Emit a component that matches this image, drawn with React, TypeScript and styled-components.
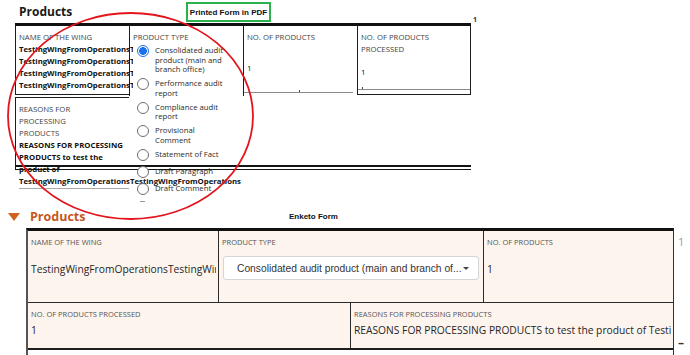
import React from 'react'
import styled, { createGlobalStyle } from 'styled-components'

const wingName = 'TestingWingFromOperationsTestingWingFromOperations'
const reasons =
	'REASONS FOR PROCESSING PRODUCTS to test the product of TestingWingFromOperationsTestingWingFromOperations'

const productTypes = [
	'Consolidated audit product (main and branch office)',
	'Performance audit report',
	'Compliance audit report',
	'Provisional Comment',
	'Statement of Fact',
	'Draft Paragraph',
	'Draft Comment'
]

const App: React.FC = () => {
	return (
		<>
			<GlobalStyle />
			<Page>
				<PdfSection>
					<PdfHeader>
						<SectionTitle>Products</SectionTitle>
						<SourceTag>Printed Form in PDF</SourceTag>
						<span />
						<PageMark>1</PageMark>
					</PdfHeader>
					<PdfTable>
						<PdfRow>
							<PdfCell $closed>
								<PdfLabel>Name of the wing</PdfLabel>
								{[0, 1, 2, 3].map((i) => (
									<PdfClipped key={i}>{wingName}</PdfClipped>
								))}
							</PdfCell>
							<PdfCell>
								<PdfLabel>Product type</PdfLabel>
								<RadioList>
									{productTypes.map((type, i) => (
										<RadioOption key={type}>
											<RadioCircle $checked={i === 0} />
											<RadioText>{type}</RadioText>
										</RadioOption>
									))}
									<RadioStub />
								</RadioList>
							</PdfCell>
							<PdfCell>
								<PdfLabel>No. of products</PdfLabel>
								<PdfNumber $gap={19}>1</PdfNumber>
								<PdfInputLine $tick="50%" $right={4} $bottom={3} />
							</PdfCell>
							<PdfCell $closed $right>
								<PdfLabel>No. of products processed</PdfLabel>
								<PdfNumber $gap={11}>1</PdfNumber>
								<PdfInputLine $tick="4px" $right={0} $bottom={4} />
							</PdfCell>
						</PdfRow>
						<PdfReasonsRow>
							<PdfReasonsCell>
								<PdfLabel $narrow>Reasons for processing products</PdfLabel>
								<PdfReasonsValue>{reasons}</PdfReasonsValue>
							</PdfReasonsCell>
						</PdfReasonsRow>
						<PdfRule />
					</PdfTable>
				</PdfSection>

				<EnketoSection>
					<EnketoHeader>
						<Caret />
						<GroupTitle>Products</GroupTitle>
						<SourceCaption>Enketo Form</SourceCaption>
					</EnketoHeader>
					<EnketoBody>
						<FormTable>
							<FormRow $cols="190px 265px 1fr" $height={72} $rule="1px solid #2b2b2b">
								<FormCell>
									<FormLabel>Name of the wing</FormLabel>
									<FormValue $gap={15}>{wingName}</FormValue>
								</FormCell>
								<FormCell $divider>
									<FormLabel>Product type</FormLabel>
									<SelectBox>
										<SelectText>Consolidated audit product (main and branch of...</SelectText>
										<SelectCaret />
									</SelectBox>
								</FormCell>
								<FormCell $divider>
									<FormLabel>No. of products</FormLabel>
									<FormValue $gap={15}>1</FormValue>
								</FormCell>
							</FormRow>
							<FormRow $cols="322px 1fr" $height={47} $rule="2px solid #1e1e1e">
								<FormCell>
									<FormLabel>No. of products processed</FormLabel>
									<FormValue $gap={4}>1</FormValue>
								</FormCell>
								<FormCell $divider>
									<FormLabel>Reasons for processing products</FormLabel>
									<FormValue $gap={4}>{reasons}</FormValue>
								</FormCell>
							</FormRow>
							<FormRow $cols="1fr" $height={12} $rule="none" />
						</FormTable>
						<SideMarks>
							<RepeatIndex>1</RepeatIndex>
							<RemoveMark>–</RemoveMark>
						</SideMarks>
					</EnketoBody>
				</EnketoSection>

				<Annotation viewBox="0 0 260 225" aria-hidden>
					<ellipse cx="130.5" cy="116" rx="122.5" ry="103" fill="none" stroke="#e3141c" strokeWidth="1.8" />
				</Annotation>
			</Page>
		</>
	)
}

export default App

const GlobalStyle = createGlobalStyle`
	html, body {
		margin: 0;
		padding: 0;
		background: #fff;
	}
	body {
		font-family: 'Open Sans', 'Liberation Sans', sans-serif;
		color: #222;
	}
	* {
		box-sizing: border-box;
	}
`

const Page = styled.div`
	position: relative;
	width: 690px;
	height: 355px;
	overflow: hidden;
	background: #fff;
`

/* ---------- printed PDF part ---------- */

const PdfSection = styled.section`
	height: 205px;
	padding-left: 15px;
`

const PdfHeader = styled.div`
	display: grid;
	grid-template-columns: 171px 85px 1fr auto;
	width: 462px;
	height: 23px;
`

const SectionTitle = styled.h1`
	margin: 0;
	padding-left: 4px;
	align-self: center;
	font-size: 12px;
	font-weight: 700;
	color: #1a1a1a;
`

const SourceTag = styled.div`
	margin-top: 2px;
	height: 20px;
	display: flex;
	align-items: center;
	justify-content: center;
	border: 2px solid #2db14c;
	font-family: 'Liberation Sans', Arial, sans-serif;
	font-size: 8px;
	font-weight: 700;
	color: #111;
`

const PageMark = styled.span`
	align-self: end;
	margin-bottom: -1px;
	font-size: 7px;
	font-weight: 700;
	line-height: 8px;
	color: #333;
`

const PdfTable = styled.div`
	width: 456px;
	border-top: 3px solid #111;
`

const PdfRow = styled.div`
	display: grid;
	grid-template-columns: repeat(4, 114px);
	grid-template-rows: 70px;
	height: 70px;
`

const PdfCell = styled.div<{ $closed?: boolean; $right?: boolean }>`
	position: relative;
	display: flex;
	flex-direction: column;
	min-height: 0;
	padding: 5px 3px 0;
	border-left: 1px solid #1d1d1d;
	border-right: ${({ $right }) => ($right ? '1px solid #1d1d1d' : 'none')};
	border-bottom: ${({ $closed }) => ($closed ? '1px solid #1d1d1d' : 'none')};
	margin-bottom: ${({ $closed }) => ($closed ? '1px' : '0')};
`

const PdfLabel = styled.div<{ $narrow?: boolean }>`
	max-width: ${({ $narrow }) => ($narrow ? '62px' : 'none')};
	font-size: 7.75px;
	line-height: 12px;
	text-transform: uppercase;
	color: #454545;
`

const PdfClipped = styled.div`
	flex: none;
	width: 114px;
	overflow: hidden;
	white-space: nowrap;
	font-size: 7.75px;
	font-weight: 700;
	line-height: 12px;
	color: #111;
`

const PdfNumber = styled.div<{ $gap: number }>`
	margin-top: ${({ $gap }) => $gap}px;
	font-size: 8px;
	line-height: 12px;
	color: #111;
`

const PdfInputLine = styled.div<{ $tick: string; $right: number; $bottom: number }>`
	position: relative;
	flex: none;
	margin: auto ${({ $right }) => $right - 3}px ${({ $bottom }) => $bottom}px -3px;
	height: 1px;
	background: #8a8a8a;

	&::after {
		content: '';
		position: absolute;
		left: ${({ $tick }) => $tick};
		top: -2px;
		width: 1px;
		height: 2px;
		background: #444;
	}
`

const RadioList = styled.div`
	flex: none;
	display: flex;
	flex-direction: column;
	gap: 4.5px;
	margin-top: 3.25px;
	padding-left: 4px;
`

const RadioOption = styled.div`
	display: flex;
	align-items: flex-start;
	gap: 6px;
	min-height: 12.5px;
`

const RadioCircle = styled.span<{ $checked?: boolean }>`
	flex: none;
	width: 12px;
	height: 12px;
	margin-top: -1.25px;
	border-radius: 50%;
	border: 1px solid ${({ $checked }) => ($checked ? '#1e6fe6' : '#6f6f6f')};
	background: ${({ $checked }) =>
		$checked ? 'radial-gradient(circle, #1a73e8 0 3.6px, #fff 4.1px)' : '#fff'};
`

const RadioText = styled.span`
	width: 75px;
	font-size: 7.75px;
	line-height: 9.5px;
	color: #2a2a2a;
`

const RadioStub = styled.span`
	width: 5px;
	height: 1px;
	margin-left: 3px;
	background: #9a9a9a;
`

const PdfReasonsRow = styled.div`
	margin-top: 1px;
	height: 68px;
`

const PdfReasonsCell = styled.div`
	width: 114px;
	height: 100%;
	padding: 5px 3px 0;
	border-left: 1px solid #1d1d1d;
	border-top: 1px solid #1d1d1d;
`

const PdfReasonsValue = styled.div`
	width: 110px;
	padding-bottom: 1px;
	border-bottom: 1px solid #a8a8a8;
	font-size: 7.75px;
	font-weight: 700;
	line-height: 12px;
	color: #111;
`

const PdfRule = styled.div`
	height: 5px;
	border-top: 2px solid #151515;
	border-bottom: 1px solid #151515;
	border-left: 1px solid #151515;
`

/* ---------- enketo part ---------- */

const EnketoSection = styled.section``

const EnketoHeader = styled.header`
	display: flex;
	align-items: center;
	height: 23px;
	padding-left: 8px;
`

const Caret = styled.span`
	width: 0;
	height: 0;
	margin-right: 10px;
	border-left: 6px solid transparent;
	border-right: 6px solid transparent;
	border-top: 8px solid #d0611f;
`

const GroupTitle = styled.h2`
	width: 259px;
	margin: 0;
	font-size: 12.5px;
	font-weight: 700;
	color: #c4581c;
`

const SourceCaption = styled.span`
	font-family: 'Liberation Sans', Arial, sans-serif;
	font-size: 8px;
	font-weight: 700;
	color: #111;
`

const EnketoBody = styled.div`
	display: grid;
	grid-template-columns: 648px 1fr;
	padding-left: 26px;
`

const FormTable = styled.div`
	border-top: 3px solid #111;
	border-left: 2px solid #555;
	border-right: 1px solid #333;
`

const FormRow = styled.div<{ $cols: string; $height: number; $rule: string }>`
	display: grid;
	grid-template-columns: ${({ $cols }) => $cols};
	height: ${({ $height }) => $height}px;
	border-bottom: ${({ $rule }) => $rule};
`

const FormCell = styled.div<{ $divider?: boolean }>`
	display: flex;
	flex-direction: column;
	min-width: 0;
	padding: 6px 2px 0 3px;
	background: #fdf4ee;
	border-left: ${({ $divider }) => ($divider ? '1px solid #2b2b2b' : 'none')};
`

const FormLabel = styled.div`
	font-size: 7.5px;
	line-height: 10px;
	text-transform: uppercase;
	color: #555;
`

const FormValue = styled.div<{ $gap: number }>`
	margin-top: ${({ $gap }) => $gap}px;
	overflow: hidden;
	white-space: nowrap;
	font-size: 10.25px;
	line-height: 14px;
	color: #262626;
`

const SelectBox = styled.div`
	display: flex;
	align-items: center;
	justify-content: space-between;
	width: 256px;
	height: 24px;
	margin-top: 9px;
	margin-left: 1px;
	padding: 0 9px 0 13px;
	background: #fff;
	border: 1px solid #d6d6d6;
	border-radius: 3px;
`

const SelectText = styled.span`
	font-family: 'Liberation Sans', Arial, sans-serif;
	font-size: 10.25px;
	color: #333;
	white-space: nowrap;
`

const SelectCaret = styled.span`
	width: 0;
	height: 0;
	border-left: 3px solid transparent;
	border-right: 3px solid transparent;
	border-top: 3px solid #444;
`

const SideMarks = styled.div`
	display: flex;
	flex-direction: column;
	padding-left: 4px;
`

const RepeatIndex = styled.span`
	margin-top: 6px;
	font-size: 11px;
	line-height: 16px;
	color: #999;
`

const RemoveMark = styled.span`
	margin-top: 85px;
	font-size: 12px;
	font-weight: 700;
	line-height: 16px;
	color: #333;
`

const Annotation = styled.svg`
	position: absolute;
	left: 0;
	top: 0;
	width: 260px;
	height: 225px;
	pointer-events: none;
`
